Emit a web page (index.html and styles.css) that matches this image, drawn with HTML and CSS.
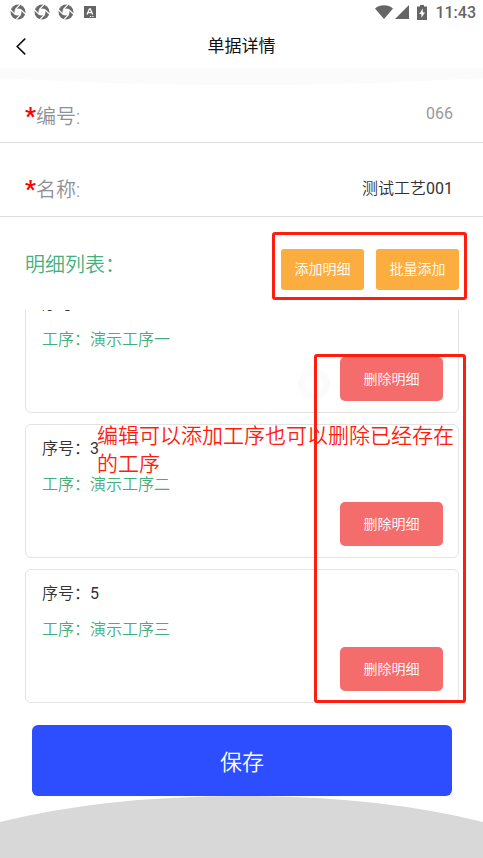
FILE: index.html
```html
<!DOCTYPE html>
<html lang="zh-CN">
<head>
<meta charset="utf-8">
<meta name="viewport" content="width=device-width, initial-scale=1">
<title>单据详情</title>
<link rel="stylesheet" href="styles.css">
</head>
<body>
<svg class="sprite" aria-hidden="true">
  <symbol id="sync" viewBox="0 0 16 16">
    <circle cx="8" cy="8" r="7.5" fill="#6b6b6b"/>
    <path d="M6.2 4.4 10.4 4.8 11.6 6.2 11.2 10.2 9.8 11.6 5.6 11.2 4.4 9.8 4.8 5.8Z" fill="#fff"/>
    <path d="M5.6 5.2 10 .6M10.8 5.6 15.4 10M10.4 10.8 6 15.4M5.2 10.4 .6 6" stroke="#fff" stroke-width="1.2"/>
  </symbol>
</svg>
<div class="page">
  <div class="status">
    <div class="status-group">
      <svg class="sync"><use href="#sync"/></svg>
      <svg class="sync"><use href="#sync"/></svg>
      <svg class="sync"><use href="#sync"/></svg>
      <svg class="app" viewBox="0 0 12 12"><path fill="#656565" d="M0 0h12v12H0z"/><path d="M3 8.6 5.5 2.8h.8L8.6 8.6M4.2 6.7h3.5" fill="none" stroke="#fff" stroke-width="1.3"/><path fill="#fff" d="M6 10h1.2v1H6zM8.4 10h1.2v1H8.4z"/></svg>
    </div>
    <div class="status-group status-right">
      <svg class="wifi" viewBox="0 0 18 14"><path fill="#656565" d="M9 14 0 3.4C5-.9 13-.9 18 3.4Z"/></svg>
      <svg class="signal" viewBox="0 0 14 14"><path fill="#656565" d="M14 0v14H0Z"/></svg>
      <svg class="battery" viewBox="0 0 10 15"><path fill="#656565" d="M3 0h4v1.5h3V15H0V1.5h3Z"/><path fill="#fff" d="M5.8 3.6 2.2 9h2.2v3.8L8 7.6H5.8Z"/></svg>
      <span class="clock">11:43</span>
    </div>
  </div>
  <header class="nav">
    <button class="back" type="button" aria-label="返回"><svg viewBox="0 0 10 17"><path d="M9.2.6 1.2 8.5l8 7.9" fill="none" stroke="#111" stroke-width="1.6"/></svg></button>
    <h1>单据详情</h1>
  </header>
  <svg class="arc" viewBox="0 0 483 17" preserveAspectRatio="none" aria-hidden="true"><path fill="#fbfbfb" d="M0 0h483v10Q242 24 0 10Z"/></svg>

  <form class="form">
    <div class="field">
      <label for="code"><b>*</b>编号:</label>
      <input id="code" class="muted" value="066" readonly>
    </div>
    <div class="field">
      <label for="name"><b>*</b>名称:</label>
      <input id="name" value="测试工艺001">
    </div>
    <div class="toolbar">
      <h2>明细列表：</h2>
      <div class="tools">
        <button class="add" type="button">添加明细</button>
        <button class="add" type="button">批量添加</button>
        <div class="mark mark-tools"></div>
      </div>
    </div>
    <div class="details">
      <ul class="list">
        <li class="card"><p>序号：1</p><p class="step">工序：演示工序一</p><button class="remove" type="button">删除明细</button></li>
        <li class="card"><p>序号：3</p><p class="step">工序：演示工序二</p><button class="remove" type="button">删除明细</button></li>
        <li class="card"><p>序号：5</p><p class="step">工序：演示工序三</p><button class="remove" type="button">删除明细</button></li>
      </ul>
      <div class="ring"></div>
      <div class="mark mark-list"></div>
      <p class="note">编辑可以添加工序也可以删除已经存在的工序</p>
    </div>
    <button class="save" type="submit">保存</button>
  </form>
  <svg class="hill" viewBox="0 0 483 62" preserveAspectRatio="none" aria-hidden="true"><path fill="#d8d8d8" d="M0 26Q105 0 242 0T483 26V62H0Z"/></svg>
</div>
</body>
</html>
```
FILE: styles.css
```css
* { box-sizing: border-box; }
body {
  margin: 0;
  background: #fff;
  color: #333;
  font-family: Roboto, "Noto Sans CJK SC DemiLight", "Noto Sans CJK SC", sans-serif;
  font-size: 16px;
  font-weight: 400;
}
h1, h2, p, ul { margin: 0; padding: 0; font-weight: inherit; }
button, input { font: inherit; border: 0; padding: 0; }
svg { display: block; }
.sprite { display: none; }

.page { display: flex; flex-direction: column; height: 100vh; overflow: hidden; }

.status { display: flex; justify-content: space-between; height: 24px; padding: 0 7px 0 10px; }
.status-group { display: flex; align-items: center; gap: 8px; }
.sync { width: 16px; height: 16px; }
.app { width: 12px; height: 12px; margin-left: 2px; }
.wifi { width: 18px; height: 14px; }
.signal { width: 14px; height: 14px; margin-left: -6px; }
.battery { width: 10px; height: 15px; }
.clock { color: #656565; font-size: 16px; font-weight: 500; }

.nav { position: relative; display: flex; align-items: center; justify-content: center; height: 44px; }
.nav h1 { color: #111; font-family: Roboto, "Noto Sans CJK SC", sans-serif; font-size: 17px; font-weight: 400; line-height: 24px; }
.back { position: absolute; left: 16px; top: 14px; background: none; }
.back svg { width: 10px; height: 17px; }
.arc { flex: none; width: 100%; height: 17px; }

.form { display: flex; flex-direction: column; flex: 1; min-height: 0; }
.field {
  display: flex;
  align-items: center;
  justify-content: space-between;
  flex: none;
  height: 74px;
  padding: 14px 30px 0 25px;
  border-bottom: 1px solid #ddd;
}
.field:first-child { height: 58px; padding-top: 0; }
.field label { padding-top: 5px; color: #8f9094; font-size: 20px; font-weight: 350; line-height: 28px; white-space: nowrap; }
.field b { color: #f00; font-size: 24px; font-weight: 700; line-height: 28px; }
.field input { flex: 1; min-width: 0; height: 28px; background: none; color: #333; text-align: right; outline: 0; }
.field .muted { color: #999; }

.toolbar { display: flex; align-items: center; justify-content: space-between; flex: none; height: 93px; padding: 11px 24px 0 25px; }
.toolbar h2 { color: #42b07d; font-size: 20px; font-weight: 350; line-height: 28px; padding-bottom: 8px; }
.tools { position: relative; display: flex; gap: 12px; }
.add { width: 83px; height: 41px; padding-bottom: 2px; border-radius: 3px; background: #fbae3f; color: #fff; font-size: 14px; font-weight: 350; }

.mark { position: absolute; border: 3px solid #ff1d10; border-radius: 3px; pointer-events: none; }
.mark-tools { inset: -17px -8px -10px -9px; }
.mark-list { top: 44px; right: 17px; bottom: 0; width: 152px; }

.details { position: relative; flex: 1; min-height: 0; }
.list {
  display: flex;
  flex-direction: column;
  justify-content: flex-end;
  gap: 11px;
  height: 100%;
  padding: 0 24px 0 25px;
  overflow: hidden;
  list-style: none;
}
.card {
  display: flex;
  flex-direction: column;
  flex: none;
  gap: 12px;
  padding: 12px 15px 11px 16px;
  border: 1px solid #e3e3e3;
  border-radius: 6px;
  line-height: 24px;
}
.step { color: #42b07d; }
.remove { align-self: flex-end; width: 103px; height: 44px; margin-top: -7px; border-radius: 5px; background: #f56c6c; color: #fff; font-size: 14px; font-weight: 350; }
.ring { position: absolute; right: 153px; top: 58px; width: 32px; height: 32px; border: 7px solid #fbfbfe; border-radius: 50%; }
.note { position: absolute; left: 97px; top: 112px; right: 20px; color: #ff1d10; font-size: 21px; font-weight: 350; line-height: 28px; }

.save { flex: none; height: 71px; margin: 22px 31px 0 32px; padding-bottom: 2px; border-radius: 6px; background: #2c4eff; color: #fff; font-size: 22px; }
.hill { flex: none; width: 100%; height: 62px; }
```
